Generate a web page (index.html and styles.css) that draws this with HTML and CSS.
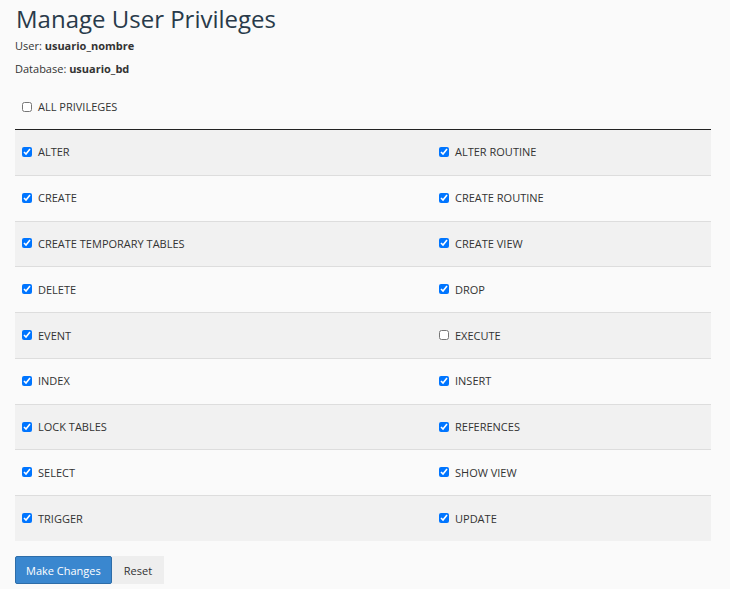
FILE: index.html
```html
<!DOCTYPE html>
<html>
<head>
<meta charset="utf-8">
<link rel="stylesheet" href="styles.css">
</head>
<body>
<div class="page">
  <h1 class="title">Manage User Privileges</h1>
  <p class="meta">User: <b>usuario_nombre</b></p>
  <p class="meta">Database: <b>usuario_bd</b></p>
  <div class="all">
    <label class="chk"><input type="checkbox"> ALL PRIVILEGES</label>
  </div>
  <table class="privs">
    <tbody>
      <tr><td class="c1"><label class="chk"><input type="checkbox" checked> ALTER</label></td><td class="c2"><label class="chk"><input type="checkbox" checked> ALTER ROUTINE</label></td></tr>
      <tr><td class="c1"><label class="chk"><input type="checkbox" checked> CREATE</label></td><td class="c2"><label class="chk"><input type="checkbox" checked> CREATE ROUTINE</label></td></tr>
      <tr><td class="c1"><label class="chk"><input type="checkbox" checked> CREATE TEMPORARY TABLES</label></td><td class="c2"><label class="chk"><input type="checkbox" checked> CREATE VIEW</label></td></tr>
      <tr><td class="c1"><label class="chk"><input type="checkbox" checked> DELETE</label></td><td class="c2"><label class="chk"><input type="checkbox" checked> DROP</label></td></tr>
      <tr><td class="c1"><label class="chk"><input type="checkbox" checked> EVENT</label></td><td class="c2"><label class="chk"><input type="checkbox"> EXECUTE</label></td></tr>
      <tr><td class="c1"><label class="chk"><input type="checkbox" checked> INDEX</label></td><td class="c2"><label class="chk"><input type="checkbox" checked> INSERT</label></td></tr>
      <tr><td class="c1"><label class="chk"><input type="checkbox" checked> LOCK TABLES</label></td><td class="c2"><label class="chk"><input type="checkbox" checked> REFERENCES</label></td></tr>
      <tr><td class="c1"><label class="chk"><input type="checkbox" checked> SELECT</label></td><td class="c2"><label class="chk"><input type="checkbox" checked> SHOW VIEW</label></td></tr>
      <tr><td class="c1"><label class="chk"><input type="checkbox" checked> TRIGGER</label></td><td class="c2"><label class="chk"><input type="checkbox" checked> UPDATE</label></td></tr>
    </tbody>
  </table>
  <div class="actions">
    <button class="btn btn-primary">Make Changes</button><button class="btn btn-default">Reset</button>
  </div>
</div>
</body>
</html>
```
FILE: styles.css
```css
html, body {
  margin: 0;
  padding: 0;
  background: #fafafa;
}
body {
  font-family: "Open Sans", "Liberation Sans", sans-serif;
  font-size: 11px;
  color: #333;
}
.page {
  padding: 0 19px 0 15px;
}
.title {
  font-size: 24px;
  font-weight: 400;
  margin: 0;
  padding-top: 3px;
  line-height: 32px;
  color: #293a4a;
  margin-left: 1px;
}
.meta {
  margin: 0;
  line-height: 15px;
  padding-top: 3px;
  padding-bottom: 5px;
  font-size: 11px;
}
.meta b { font-weight: 700; }
.all {
  padding: 18px 7px 15px;
}
.chk {
  display: flex;
  align-items: center;
  line-height: 15px;
}
.chk input {
  width: 10px;
  height: 10px;
  margin: 0 6px 0 0;
}
.privs {
  width: 100%;
  border-collapse: collapse;
  border-top: 1px solid #222;
}
.privs td {
  padding: 14.4px 7px 15.4px;
  border-top: 1px solid #ddd;
}
.privs tr:first-child td { border-top: 0; }
.privs tr:nth-child(odd) td { background: #f1f1f1; }
.privs tr:nth-child(even) td { background: #fafafa; }
.privs .c1 { width: 403px; }
.actions {
  margin-top: 15px;
  display: flex;
}
.btn {
  font-family: "Open Sans", "Liberation Sans", sans-serif;
  font-size: 11px;
  height: 28px;
  border: 1px solid transparent;
  padding: 0 10px;
  white-space: nowrap;
  cursor: pointer;
}
.btn-primary {
  background: #3a87cf;
  border-color: #2e6da8;
  color: #fff;
  border-radius: 2px;
}
.btn-default {
  background: #eeeeee;
  color: #333;
  padding: 0 11px;
}
```
